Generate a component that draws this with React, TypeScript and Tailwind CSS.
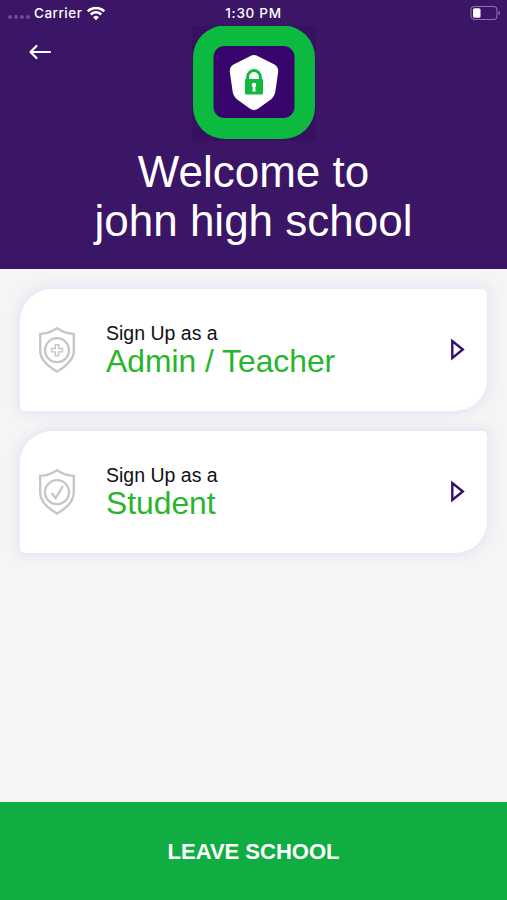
import type { ReactNode } from 'react';

interface RoleCardProps {
  role: string;
  icon: ReactNode;
}

function StatusBar() {
  return (
    <div className="grid h-[26px] grid-cols-3 items-center font-['Inter',sans-serif] text-[13.5px] font-medium tracking-[0.5px] text-white">
      <div className="flex items-center pl-2">
        <div className="flex gap-[2px] pt-[7px]">
          {[0, 1, 2, 3].map((dot) => (
            <span key={dot} className="size-1 rounded-full bg-[#6c4b92]" />
          ))}
        </div>
        <span className="ml-[4px]">Carrier</span>
        <svg className="ml-[4px]" width="20" height="15" viewBox="0 0 20 15" fill="none">
          <path d="M1.7 5.3a11.8 11.8 0 0 1 16.6 0" stroke="white" strokeWidth="2.5" />
          <path d="M4.8 8.5a7.4 7.4 0 0 1 10.4 0" stroke="white" strokeWidth="2.5" />
          <path d="M10 14.3 7.1 11.2a4.2 4.2 0 0 1 5.800 0z" fill="white" />
        </svg>
      </div>
      <span className="text-center tracking-[0.7px]">1:30 PM</span>
      <div className="flex justify-end pr-[6px]">
        <svg width="31" height="15" viewBox="0 0 31 15" fill="none">
          <rect x="1" y="0.5" width="26" height="13" rx="3.5" stroke="#8f72ad" strokeWidth="1.1" />
          <rect x="3" y="2.3" width="7.5" height="9.4" rx="1.5" fill="white" />
          <path d="M28.500 5c2 .6 2 3.400 0 4z" fill="#8f72ad" />
        </svg>
      </div>
    </div>
  );
}

function Logo() {
  return (
    <svg width="124" height="115" viewBox="0 0 124 115" className="block">
      <rect width="124" height="115" fill="#37105f" />
      <rect x="1" y="-0.5" width="122" height="113.5" rx="32" fill="#0dba40" />
      <rect x="21.5" y="20" width="81" height="72" rx="11" fill="#37056b" />
      <path
        d="M58 30.200Q62 28 66 30.200L82.500 38.500Q86.500 41 86.200 45.500L83.600 64Q83 69.500 79.500 73L67 82Q62 86 57 82L44.500 73Q41 69.500 40.400 64L37.800 45.500Q37.500 41 41.500 38.500Z"
        fill="white"
      />
      <path d="M55.600 55V51a6.400 6.400 0 0 1 12.800 0V55" fill="none" stroke="#10b83f" strokeWidth="3" />
      <rect x="53" y="53" width="18" height="15.500" rx="1" fill="#10b83f" />
      <circle cx="62" cy="59" r="2.300" fill="white" />
      <path d="M61 59.500h2l.7 6h-3.400z" fill="white" />
    </svg>
  );
}

function ShieldIcon({ children }: { children: ReactNode }) {
  return (
    <svg width="38" height="48" viewBox="0 0 38 48" fill="none" stroke="#c6c6c6" strokeWidth="2.3">
      <path d="M19 2.200C14 5.500 8.500 7.600 2.200 7.800V25C2.200 34 9.500 40 19 45.600C28.500 40 35.800 34 35.800 25V7.800C29.500 7.600 24 5.500 19 2.200Z" />
      <circle cx="19" cy="24.200" r="12" />
      {children}
    </svg>
  );
}

function RoleCard({ role, icon }: RoleCardProps) {
  return (
    <button
      type="button"
      className="flex h-[122px] w-full items-center rounded-tl-[32px] rounded-tr-[5px] rounded-br-[32px] rounded-bl-[5px] bg-white pr-[22px] pl-[18px] text-left shadow-[0_0_12px_3px_#e4e4f5]"
    >
      {icon}
      <span className="ml-[30px] flex flex-1 flex-col">
        <span className="text-[19.5px] leading-[22px] text-[#111111]">Sign Up as a</span>
        <span className="text-[31.8px] leading-[35px] text-[#28b52b]">{role}</span>
      </span>
      <svg className="-mt-px" width="15" height="23" viewBox="0 0 15 23" fill="none" stroke="#35106a" strokeWidth="2.400">
        <path d="M2.300 3v17L12.800 11.500z" />
      </svg>
    </button>
  );
}

export default function App() {
  return (
    <div className="flex h-[900px] w-[507px] flex-col overflow-hidden bg-[#f5f5f5] font-['Liberation_Sans',Arial,sans-serif]">
      <header className="h-[269px] bg-[#3b1566]">
        <StatusBar />
        <div className="grid grid-cols-[1fr_124px_1fr]">
          <button type="button" aria-label="Back" className="mt-[17px] ml-[28px] h-[18px] w-6">
            <svg width="24" height="18" viewBox="0 0 24 18" fill="none" stroke="white" strokeWidth="2.200" strokeLinecap="round" strokeLinejoin="round">
              <path d="M22 9H2.500M8.500 3 2.500 9l6 6" />
            </svg>
          </button>
          <Logo />
        </div>
        <h1 className="mt-[6px] text-center text-[44px] leading-[49px] text-white">
          Welcome to
          <br />
          john high school
        </h1>
      </header>

      <main className="flex flex-1 flex-col gap-[20px] px-[20px] pt-[20px]">
        <RoleCard
          role="Admin / Teacher"
          icon={
            <ShieldIcon>
              <path d="M17.300 18.700h3.400v3.800h3.800v3.400h-3.800v3.800h-3.400v-3.800h-3.800v-3.400h3.800z" strokeWidth="1.400" />
            </ShieldIcon>
          }
        />
        <RoleCard
          role="Student"
          icon={
            <ShieldIcon>
              <path d="M13.500 25l4.200 5L25 18" />
            </ShieldIcon>
          }
        />
      </main>

      <button type="button" className="h-[98px] bg-[#10ad42] text-[22px] font-bold text-white">
        LEAVE SCHOOL
      </button>
    </div>
  );
}
